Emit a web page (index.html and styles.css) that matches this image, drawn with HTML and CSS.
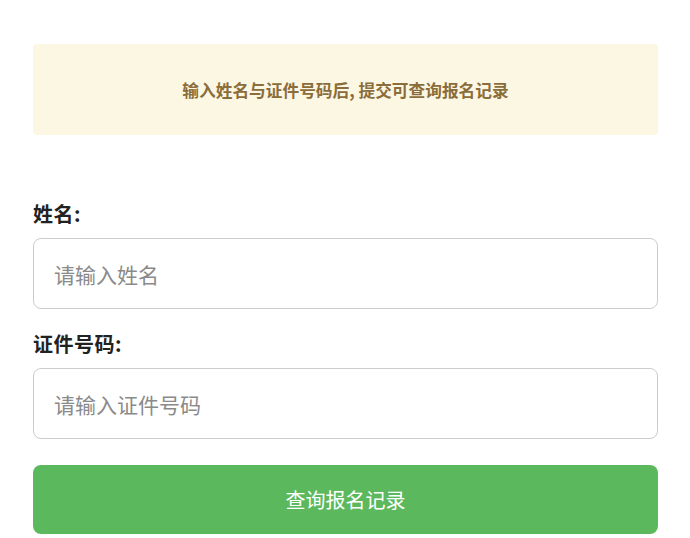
FILE: index.html
```html
<!DOCTYPE html>
<html lang="zh-CN">
<head>
<meta charset="utf-8">
<title>查询报名记录</title>
<link rel="stylesheet" href="styles.css">
</head>
<body>
<div class="page">
  <div class="notice">输入姓名与证件号码后, 提交可查询报名记录</div>
  <form class="form">
    <div class="field">
      <label class="label" for="name">姓名:</label>
      <input class="input" id="name" type="text" placeholder="请输入姓名">
    </div>
    <div class="field">
      <label class="label" for="idno">证件号码:</label>
      <input class="input" id="idno" type="text" placeholder="请输入证件号码">
    </div>
    <button class="btn" type="button">查询报名记录</button>
  </form>
</div>
</body>
</html>
```

FILE: styles.css
```css
html, body {
  margin: 0;
  padding: 0;
  background: #ffffff;
}
body {
  font-family: "Noto Sans CJK SC", "Noto Sans", sans-serif;
}
.page {
  padding: 44px 32px 0 33px;
}
.notice {
  height: 91px;
  display: flex;
  align-items: center;
  justify-content: center;
  background: #fcf7e3;
  border-radius: 4px;
  color: #8a6d3b;
  font-size: 16.7px;
  font-weight: 700;
}
.form {
  display: flex;
  flex-direction: column;
  margin-top: 67px;
}
.field {
  display: flex;
  flex-direction: column;
  margin-bottom: 23px;
}
.label {
  font-size: 20px;
  line-height: 24px;
  font-weight: 700;
  color: #222;
  margin-bottom: 12px;
  letter-spacing: 0.5px;
}
.input {
  box-sizing: border-box;
  height: 71px;
  border: 1px solid #cccccc;
  border-radius: 8px;
  padding: 0 20px;
  font-family: inherit;
  font-size: 21px;
  color: #333;
  outline: none;
}
.input::placeholder {
  color: #8a8a8a;
}
.btn {
  margin-top: 3px;
  height: 69px;
  border: none;
  border-radius: 8px;
  background: #5cb85c;
  color: #ffffff;
  font-family: inherit;
  font-size: 20px;
  cursor: pointer;
}
```
